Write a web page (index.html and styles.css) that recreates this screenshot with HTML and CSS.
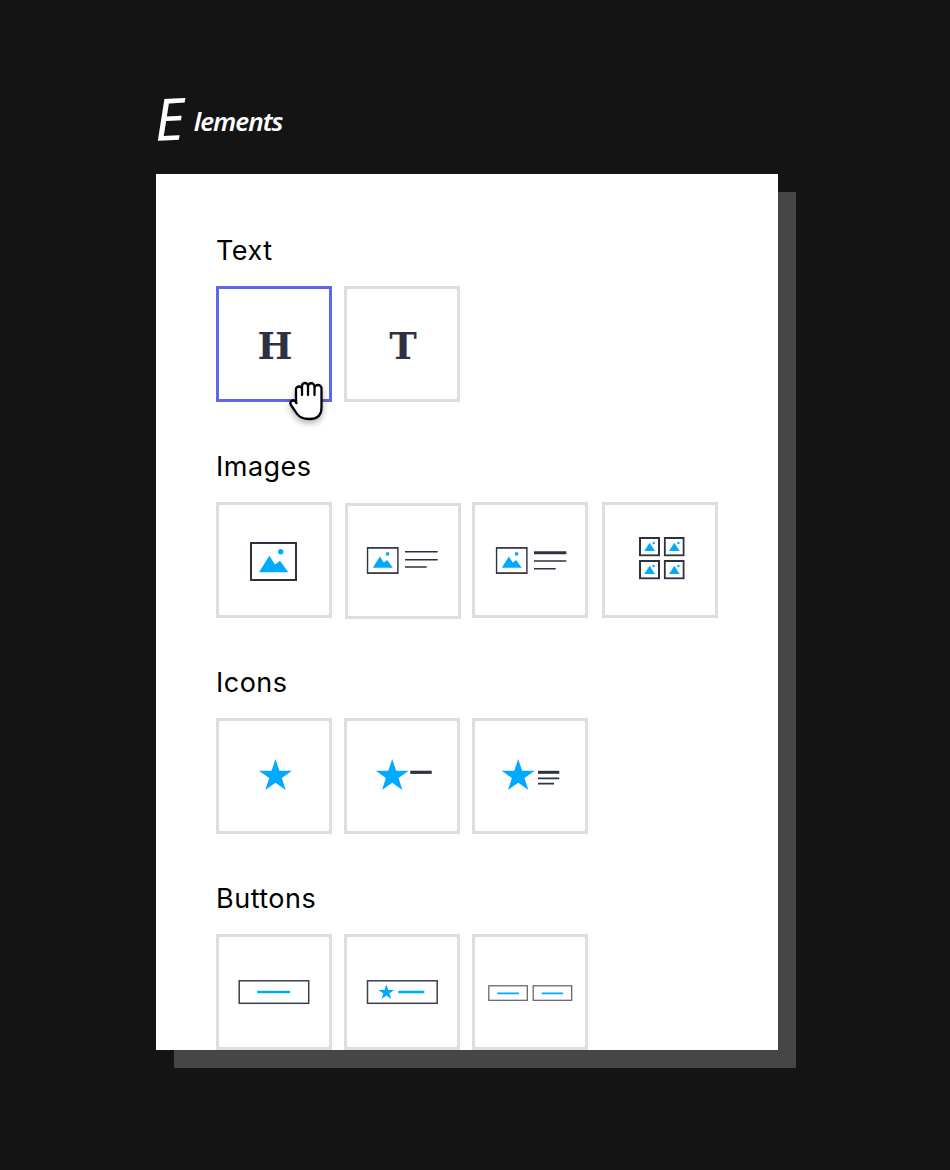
FILE: index.html
```html
<!DOCTYPE html>
<html lang="en">
<head>
<meta charset="utf-8">
<title>Elements</title>
<link rel="stylesheet" href="styles.css">
</head>
<body>
<svg class="defs" aria-hidden="true">
  <symbol id="image" viewBox="0 0 47 39">
    <rect class="frame" x="1" y="1" width="45" height="37" fill="#fff" stroke="#2e3240"/>
    <path d="M9 30.3 19.3 13.7 25 22.5 30 18.7 38.3 30.3Z" fill="#00aaff"/>
    <circle cx="30.7" cy="9.7" r="2.7" fill="#00aaff"/>
  </symbol>
  <symbol id="thumb" viewBox="0 0 21 19.4">
    <rect x="1" y="1" width="19" height="17.4" fill="#fff" stroke="#2e3240" stroke-width="2"/>
    <path d="M5.3 14 10.6 5.7 16 14Z" fill="#00aaff"/>
    <circle cx="14.7" cy="6" r="1.2" fill="#00aaff"/>
  </symbol>
  <symbol id="star" viewBox="0 0 33 31">
    <path d="M16.5 0 20.4 11.8H33L22.8 19.1 26.7 31 16.5 23.7 6.3 31 10.2 19.1 0 11.8H12.6Z" fill="#00aaff"/>
  </symbol>
</svg>

<main class="page">
  <h1 class="title"><span class="title-cap">E</span><span class="title-rest">lements</span></h1>

  <div class="card">
    <section class="group">
      <h2 class="label">Text</h2>
      <div class="row">
        <div class="tile tile-active glyph">H
          <svg class="cursor" viewBox="0 0 40 46" width="40" height="46" aria-hidden="true">
            <path d="M9 25V11.5a3 3 0 0 1 6 0V8a3 3 0 0 1 6 0a3.200 3.200 0 0 1 6.500.5V10.500a3.500 3.500 0 0 1 7 0V30C34.500 38 29 41 23 41 14 41 11 38 8 33L4 27C2 24 5 21.500 8 23L9.500 25Z" fill="#fff"/>
            <path d="M9 25V11.500a3 3 0 0 1 6 0V17M15 11.500V8a3 3 0 0 1 6 0V17M21 8.500a3.200 3.200 0 0 1 6.500 0V17M27.500 10.500a3.500 3.500 0 0 1 7 0V30C34.500 38 29 41 23 41 14 41 11 38 8 33L4 27C2 24 5 21.500 8 23L9.500 25" fill="none" stroke="#000" stroke-width="2.300" stroke-linecap="round" stroke-linejoin="round"/>
          </svg>
        </div>
        <div class="tile glyph">T</div>
      </div>
    </section>

    <section class="group">
      <h2 class="label">Images</h2>
      <div class="row">
        <div class="tile">
          <svg class="art" viewBox="3 3 110 110"><use href="#image" x="34" y="40" width="47" height="39"/></svg>
        </div>
        <div class="tile tile-nudged">
          <svg class="art" viewBox="3 3 110 110">
            <use class="image-small" href="#image" x="21.700" y="43.700" width="32" height="27.600"/>
            <path d="M60 48.700H92.700M60 56.700H92.700M60 64H81.700" stroke="#2e3240" stroke-width="1.500" fill="none"/>
          </svg>
        </div>
        <div class="tile">
          <svg class="art" viewBox="3 3 110 110">
            <use class="image-small" href="#image" x="23.700" y="44.700" width="32" height="27.600"/>
            <path d="M62 50.700H94.300" stroke="#2e3240" stroke-width="3" fill="none"/>
            <path d="M62 59H94.300M62 66.700H83.700" stroke="#2e3240" stroke-width="1.500" fill="none"/>
          </svg>
        </div>
        <div class="tile tile-last">
          <svg class="art" viewBox="3 3 110 110">
            <use href="#thumb" x="37" y="35" width="21" height="19.400"/>
            <use href="#thumb" x="61.700" y="35" width="21" height="19.400"/>
            <use href="#thumb" x="37" y="58" width="21" height="19.400"/>
            <use href="#thumb" x="61.700" y="58" width="21" height="19.400"/>
          </svg>
        </div>
      </div>
    </section>

    <section class="group">
      <h2 class="label">Icons</h2>
      <div class="row">
        <div class="tile">
          <svg class="art" viewBox="3 3 110 110"><use href="#star" x="43" y="41" width="33" height="31"/></svg>
        </div>
        <div class="tile">
          <svg class="art" viewBox="3 3 110 110">
            <use href="#star" x="31.700" y="41" width="33" height="31"/>
            <path d="M66.300 54.300H87.700" stroke="#2e3240" stroke-width="3.200" fill="none"/>
          </svg>
        </div>
        <div class="tile">
          <svg class="art" viewBox="3 3 110 110">
            <use href="#star" x="29.700" y="41" width="33" height="31"/>
            <path d="M66 54.300H87.300" stroke="#2e3240" stroke-width="3" fill="none"/>
            <path d="M66 60.300H87.300M66 65.700H82" stroke="#2e3240" stroke-width="1.700" fill="none"/>
          </svg>
        </div>
      </div>
    </section>

    <section class="group">
      <h2 class="label">Buttons</h2>
      <div class="row">
        <div class="tile">
          <svg class="art" viewBox="3 3 110 110">
            <rect x="23.200" y="46.800" width="69.500" height="22.500" fill="none" stroke="#3c3f4c" stroke-width="1.500"/>
            <path d="M41.300 58H74" stroke="#00aaff" stroke-width="2.600" fill="none"/>
          </svg>
        </div>
        <div class="tile">
          <svg class="art" viewBox="3 3 110 110">
            <rect x="23.500" y="46.800" width="69.700" height="22.500" fill="none" stroke="#3c3f4c" stroke-width="1.500"/>
            <use href="#star" x="34" y="50.300" width="16.700" height="14.800"/>
            <path d="M54.300 58H80.300" stroke="#00aaff" stroke-width="2.600" fill="none"/>
          </svg>
        </div>
        <div class="tile">
          <svg class="art" viewBox="3 3 110 110">
            <rect x="16.800" y="51.800" width="38.500" height="14.500" fill="none" stroke="#5a5c68" stroke-width="1.200"/>
            <rect x="61.200" y="51.800" width="38.500" height="14.500" fill="none" stroke="#5a5c68" stroke-width="1.200"/>
            <path d="M25.300 59.300H47M69.700 59.300H91" stroke="#00aaff" stroke-width="1.700" fill="none"/>
          </svg>
        </div>
      </div>
    </section>
  </div>
</main>
</body>
</html>
```
FILE: styles.css
```css
html, body {
  margin: 0;
  background: #141414;
}

.defs {
  position: absolute;
  width: 0;
  height: 0;
}

.frame {
  stroke-width: var(--frame, 2);
}

.image-small {
  --frame: 2.5;
}

.page {
  padding: 0 172px 120px 156px;
}

.title {
  box-sizing: border-box;
  height: 174px;
  margin: 0;
  padding-top: 86px;
  display: flex;
  align-items: baseline;
  color: #fff;
  font-family: "Noto Sans", sans-serif;
  font-style: italic;
  font-weight: 600;
  white-space: nowrap;
}

.title-cap {
  font-size: 58px;
  font-weight: 400;
  line-height: 66px;
  transform: rotate(-3deg);
  transform-origin: left bottom;
  margin-right: 8px;
}

.title-rest {
  font-size: 26px;
  line-height: 30px;
  letter-spacing: -1px;
  transform: translateY(-10px);
}

.card {
  background: #fff;
  padding: 60px 60px 0;
  box-shadow: 18px 18px 0 #464646;
}

.group {
  margin-bottom: 48px;
}

.group:last-child {
  margin-bottom: 0;
}

.label {
  margin: 0;
  height: 52px;
  padding-top: 1px;
  box-sizing: border-box;
  font-family: Inter, sans-serif;
  font-size: 27px;
  font-weight: 400;
  line-height: 32px;
  letter-spacing: .5px;
  color: #000;
}

.row {
  display: flex;
  gap: 12px;
}

.tile {
  box-sizing: border-box;
  position: relative;
  width: 116px;
  height: 116px;
  flex: none;
  border: 3px solid #dedede;
  background: #fff;
}

.tile-active {
  border-color: #5f67ea;
}

.tile-nudged {
  margin: 1px -1px -1px 1px;
}

.tile-last {
  margin-left: 2px;
}

.glyph {
  display: flex;
  align-items: center;
  justify-content: center;
  padding: 3px 0 0 2px;
  font-family: "DejaVu Serif", serif;
  font-weight: 700;
  font-size: 37px;
  color: #2e3240;
}

.art {
  display: block;
  width: 110px;
  height: 110px;
}

.cursor {
  position: absolute;
  left: 68px;
  top: 89px;
  filter: drop-shadow(0 3px 3px rgba(0, 0, 0, .3));
}
```
